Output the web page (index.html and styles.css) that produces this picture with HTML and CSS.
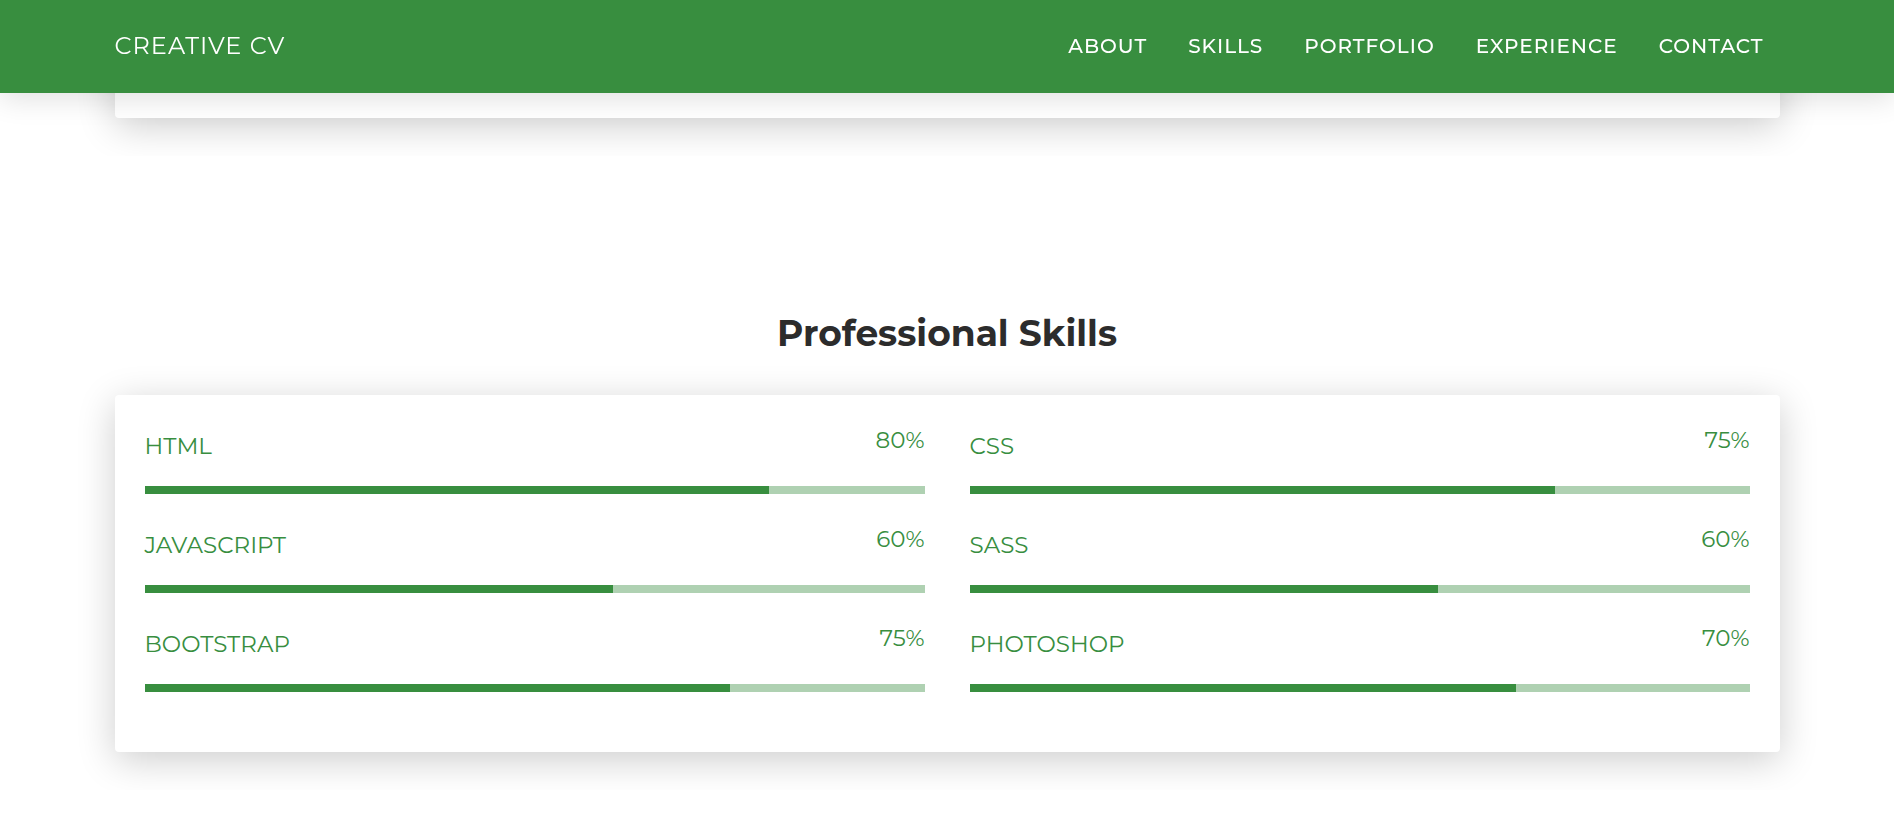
FILE: index.html
```html
<!DOCTYPE html>
<html lang="en">
<head>
<meta charset="utf-8">
<meta name="viewport" content="width=device-width, initial-scale=1">
<title>Creative CV</title>
<link rel="stylesheet" href="styles.css">
</head>
<body>
<header class="navbar">
  <div class="container navbar-inner">
    <a class="brand" href="#top">CREATIVE CV</a>
    <nav class="nav-links" aria-label="Main">
      <a href="#about">ABOUT</a>
      <a href="#skill">SKILLS</a>
      <a href="#portfolio">PORTFOLIO</a>
      <a href="#experience">EXPERIENCE</a>
      <a href="#contact">CONTACT</a>
    </nav>
  </div>
</header>
<main>
  <section class="section" id="about">
    <div class="container"><div class="card card-about"></div></div>
  </section>
  <section class="section" id="skill">
    <div class="container">
      <h2 class="title">Professional Skills</h2>
      <div class="card skills">
        <div class="skill"><label class="skill-name" for="html">HTML</label><span class="skill-value">80%</span><progress class="bar" id="html" max="100" value="80"></progress></div>
        <div class="skill"><label class="skill-name" for="css">CSS</label><span class="skill-value">75%</span><progress class="bar" id="css" max="100" value="75"></progress></div>
        <div class="skill"><label class="skill-name" for="js">JAVASCRIPT</label><span class="skill-value">60%</span><progress class="bar" id="js" max="100" value="60"></progress></div>
        <div class="skill"><label class="skill-name" for="sass">SASS</label><span class="skill-value">60%</span><progress class="bar" id="sass" max="100" value="60"></progress></div>
        <div class="skill"><label class="skill-name" for="bootstrap">BOOTSTRAP</label><span class="skill-value">75%</span><progress class="bar" id="bootstrap" max="100" value="75"></progress></div>
        <div class="skill"><label class="skill-name" for="photoshop">PHOTOSHOP</label><span class="skill-value">70%</span><progress class="bar" id="photoshop" max="100" value="70"></progress></div>
      </div>
    </div>
  </section>
</main>
</body>
</html>
```
FILE: styles.css
```css
* { box-sizing: border-box; }

body {
  margin: 0;
  background: #fff;
  color: #2c2c2c;
  font-family: Montserrat, Inter, sans-serif;
  font-size: 23px;
  font-weight: 400;
}

.container {
  width: 88%;
  max-width: 1665px;
  margin: 0 auto;
}

.navbar {
  position: fixed;
  top: 0;
  left: 0;
  right: 0;
  z-index: 10;
  background: #388e3f;
  box-shadow: 0 6px 27px rgba(0, 0, 0, 0.12);
}

.navbar-inner {
  display: flex;
  align-items: center;
  justify-content: space-between;
  min-height: 93px;
  padding-bottom: 2px;
}

.navbar a {
  color: #fff;
  text-decoration: none;
  letter-spacing: 1px;
}

.brand {
  font-size: 24px;
  font-weight: 400;
}

.nav-links {
  display: flex;
  gap: 41px;
  padding-right: 16px;
  font-size: 20px;
  font-weight: 500;
}

.card {
  background: #fff;
  border-radius: 4px;
  box-shadow: 0 8px 38px rgba(0, 0, 0, 0.2);
}

.card-about { min-height: 118px; }

.section {
  overflow: hidden;
  padding-bottom: 38px;
}

#skill { padding-top: 153px; }

.title {
  margin: 0;
  padding-bottom: 38px;
  font-size: 36px;
  font-weight: 700;
  line-height: 48px;
  text-align: center;
}

.skills {
  display: grid;
  grid-template-columns: 1fr 1fr;
  column-gap: 45px;
  row-gap: 25px;
  padding: 25px 30px 60px;
}

.skill {
  display: grid;
  grid-template-columns: 1fr auto;
  color: #388e3f;
  line-height: 40px;
}

.skill-name { padding-top: 6px; }

.bar {
  grid-column: 1 / -1;
  display: block;
  width: 100%;
  height: 8px;
  margin-top: 20px;
  appearance: none;
  border: 0;
  background: #afd1b2;
}

.bar::-webkit-progress-bar { background: #afd1b2; }
.bar::-webkit-progress-value { background: #388e3f; }
.bar::-moz-progress-bar { background: #388e3f; }
```
